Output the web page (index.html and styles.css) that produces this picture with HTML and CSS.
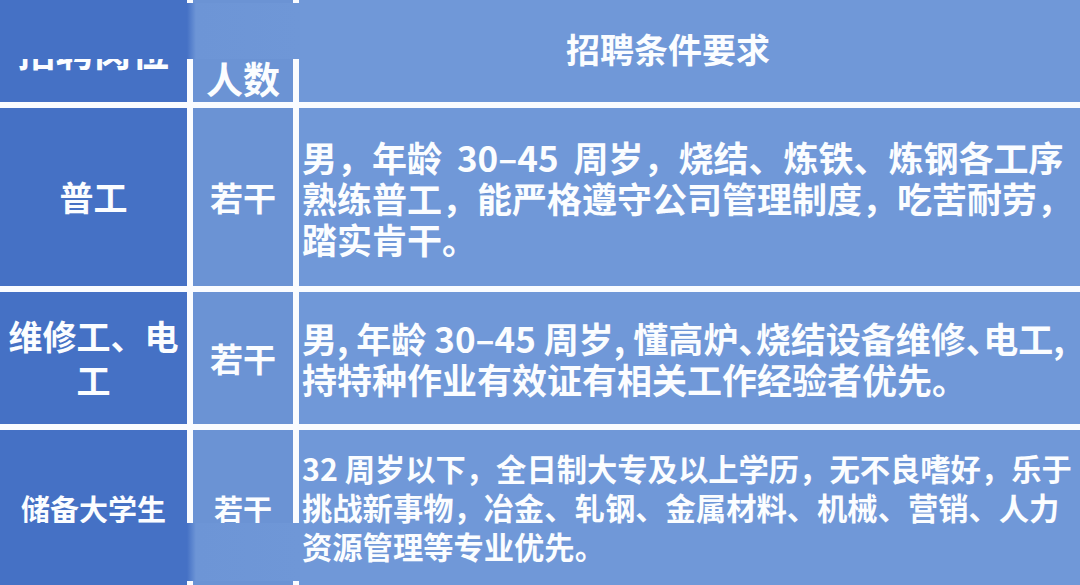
FILE: index.html
```html
<!DOCTYPE html>
<html lang="zh-CN">
<head>
<meta charset="utf-8">
<title>招聘条件</title>
<link rel="stylesheet" href="styles.css">
</head>
<body>
<div class="table">
  <div class="cell pos head-pos">招聘岗位</div>
  <div class="cell num head-num">人数</div>
  <div class="cell req head-req">招聘条件要求</div>

  <div class="cell pos">普工</div>
  <div class="cell num">若干</div>
  <div class="cell req">
    <span class="line wide">男，年龄 30–45 周岁，烧结、炼铁、炼钢各工序</span>
    <span class="line">熟练普工，能严格遵守公司管理制度，吃苦耐劳，</span>
    <span class="line">踏实肯干。</span>
  </div>

  <div class="cell pos">维修工、电工</div>
  <div class="cell num">若干</div>
  <div class="cell req">
    <span class="line tight">男, 年龄 30–45 周岁, 懂高炉、烧结设备维修、电工,</span>
    <span class="line">持特种作业有效证有相关工作经验者优先。</span>
  </div>

  <div class="cell pos small">储备大学生</div>
  <div class="cell num small">若干</div>
  <div class="cell req small-req">
    <span class="line">32 周岁以下，全日制大专及以上学历，无不良嗜好，乐于</span>
    <span class="line">挑战新事物，冶金、轧钢、金属材料、机械、营销、人力</span>
    <span class="line">资源管理等专业优先。</span>
  </div>

  <div class="patch patch-top"></div>
  <div class="patch patch-bottom"></div>
</div>
</body>
</html>
```

FILE: styles.css
```css
html, body {
  margin: 0;
  padding: 0;
  background: #ffffff;
}

body {
  width: 1080px;
  height: 585px;
  overflow: hidden;
  font-family: "Noto Sans CJK SC", "Noto Sans", sans-serif;
  font-weight: 700;
  color: #fbfdff;
}

.table {
  position: relative;
  width: 1080px;
  height: 585px;
  display: grid;
  grid-template-columns: 187px 100px 1fr;
  grid-template-rows: 102px 178px 132px 155px;
  gap: 6px;
  background: #fafcff;
  overflow: hidden;
}

.cell {
  display: flex;
  align-items: center;
  justify-content: center;
  text-align: center;
}

.pos {
  background: #4571c5;
  font-size: 34px;
  line-height: 44px;
  padding: 0 6px;
}

.num {
  background: #6b93d4;
  font-size: 33px;
  line-height: 42px;
}

.req {
  background: #7098d8;
  flex-direction: column;
  align-items: flex-start;
  justify-content: center;
  text-align: left;
  padding-left: 3px;
  font-size: 35px;
  line-height: 41px;
}

.line {
  display: block;
  height: 41px;
  white-space: nowrap;
}

.wide {
  word-spacing: 7px;
}

.tight {
  font-feature-settings: "halt";
}

.small {
  font-size: 29px;
}

.small-req {
  font-size: 30.3px;
  line-height: 39px;
}

.small-req .line {
  height: 39px;
}

.head-pos {
  font-size: 38px;
  padding-bottom: 2px;
}

.head-num {
  font-size: 37px;
  line-height: 46px;
  align-items: flex-end;
  padding-bottom: 1px;
}

.head-req {
  font-size: 34px;
  align-items: center;
  padding-right: 46px;
  padding-bottom: 6px;
}

.patch {
  position: absolute;
  left: 0;
  width: 300px;
  background: linear-gradient(to right, #4571c5 0, #4571c5 187px, #6d95d6 196px, #6f97d7 100%);
}

.patch-top {
  top: 3px;
  height: 56px;
}

.patch-bottom {
  top: 523px;
  height: 58px;
}
```
